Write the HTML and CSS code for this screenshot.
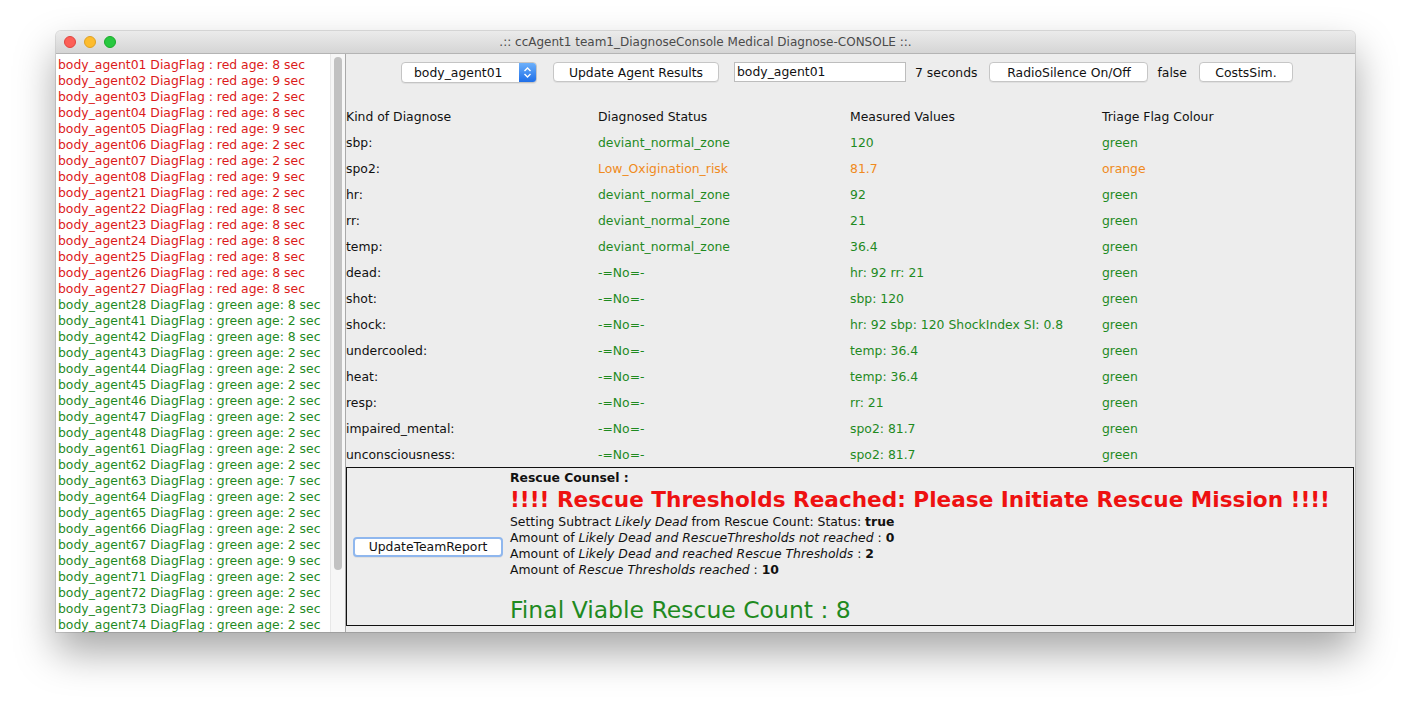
FILE: index.html
```html
<!DOCTYPE html>
<html>
<head>
<meta charset="utf-8">
<link rel="stylesheet" href="styles.css">
</head>
<body>
<div class="desktop">
  <div class="window">
    <div class="titlebar">
      <div class="lights"><span class="l red"></span><span class="l yellow"></span><span class="l green"></span></div>
      <div class="title">.:: ccAgent1 team1_DiagnoseConsole Medical Diagnose-CONSOLE ::.</div>
    </div>
    <div class="content">
      <div class="listpane">
        <div class="list">
          <div class="r">body_agent01 DiagFlag : red age: 8 sec</div>
          <div class="r">body_agent02 DiagFlag : red age: 9 sec</div>
          <div class="r">body_agent03 DiagFlag : red age: 2 sec</div>
          <div class="r">body_agent04 DiagFlag : red age: 8 sec</div>
          <div class="r">body_agent05 DiagFlag : red age: 9 sec</div>
          <div class="r">body_agent06 DiagFlag : red age: 2 sec</div>
          <div class="r">body_agent07 DiagFlag : red age: 2 sec</div>
          <div class="r">body_agent08 DiagFlag : red age: 9 sec</div>
          <div class="r">body_agent21 DiagFlag : red age: 2 sec</div>
          <div class="r">body_agent22 DiagFlag : red age: 8 sec</div>
          <div class="r">body_agent23 DiagFlag : red age: 8 sec</div>
          <div class="r">body_agent24 DiagFlag : red age: 8 sec</div>
          <div class="r">body_agent25 DiagFlag : red age: 8 sec</div>
          <div class="r">body_agent26 DiagFlag : red age: 8 sec</div>
          <div class="r">body_agent27 DiagFlag : red age: 8 sec</div>
          <div class="g">body_agent28 DiagFlag : green age: 8 sec</div>
          <div class="g">body_agent41 DiagFlag : green age: 2 sec</div>
          <div class="g">body_agent42 DiagFlag : green age: 8 sec</div>
          <div class="g">body_agent43 DiagFlag : green age: 2 sec</div>
          <div class="g">body_agent44 DiagFlag : green age: 2 sec</div>
          <div class="g">body_agent45 DiagFlag : green age: 2 sec</div>
          <div class="g">body_agent46 DiagFlag : green age: 2 sec</div>
          <div class="g">body_agent47 DiagFlag : green age: 2 sec</div>
          <div class="g">body_agent48 DiagFlag : green age: 2 sec</div>
          <div class="g">body_agent61 DiagFlag : green age: 2 sec</div>
          <div class="g">body_agent62 DiagFlag : green age: 2 sec</div>
          <div class="g">body_agent63 DiagFlag : green age: 7 sec</div>
          <div class="g">body_agent64 DiagFlag : green age: 2 sec</div>
          <div class="g">body_agent65 DiagFlag : green age: 2 sec</div>
          <div class="g">body_agent66 DiagFlag : green age: 2 sec</div>
          <div class="g">body_agent67 DiagFlag : green age: 2 sec</div>
          <div class="g">body_agent68 DiagFlag : green age: 9 sec</div>
          <div class="g">body_agent71 DiagFlag : green age: 2 sec</div>
          <div class="g">body_agent72 DiagFlag : green age: 2 sec</div>
          <div class="g">body_agent73 DiagFlag : green age: 2 sec</div>
          <div class="g">body_agent74 DiagFlag : green age: 2 sec</div>
        </div>
        <div class="scrollbar"><div class="thumb"></div></div>
      </div>
      <div class="main">
        <div class="toolbar">
          <div class="combo"><span class="combo-text">body_agent01</span><span class="combo-arrow"><svg width="9" height="13" viewBox="0 0 9 13"><path d="M1.5 5 L4.5 2 L7.5 5 M1.5 8 L4.5 11 L7.5 8" fill="none" stroke="#fff" stroke-width="1.4"/></svg></span></div>
          <div class="btn b-update">Update Agent Results</div>
          <div class="field">body_agent01</div>
          <span class="lbl">7 seconds</span>
          <div class="btn b-radio">RadioSilence On/Off</div>
          <span class="lbl">false</span>
          <div class="btn b-costs">CostsSim.</div>
        </div>
        <div class="table">
          <div class="row"><span>Kind of Diagnose</span><span>Diagnosed Status</span><span>Measured Values</span><span>Triage Flag Colour</span></div>
          <div class="row"><span>sbp:</span><span class="ok">deviant_normal_zone</span><span class="ok">120</span><span class="ok">green</span></div>
          <div class="row"><span>spo2:</span><span class="warn">Low_Oxigination_risk</span><span class="warn">81.7</span><span class="warn">orange</span></div>
          <div class="row"><span>hr:</span><span class="ok">deviant_normal_zone</span><span class="ok">92</span><span class="ok">green</span></div>
          <div class="row"><span>rr:</span><span class="ok">deviant_normal_zone</span><span class="ok">21</span><span class="ok">green</span></div>
          <div class="row"><span>temp:</span><span class="ok">deviant_normal_zone</span><span class="ok">36.4</span><span class="ok">green</span></div>
          <div class="row"><span>dead:</span><span class="ok">-=No=-</span><span class="ok">hr: 92 rr: 21</span><span class="ok">green</span></div>
          <div class="row"><span>shot:</span><span class="ok">-=No=-</span><span class="ok">sbp: 120</span><span class="ok">green</span></div>
          <div class="row"><span>shock:</span><span class="ok">-=No=-</span><span class="ok">hr: 92 sbp: 120 ShockIndex SI: 0.8</span><span class="ok">green</span></div>
          <div class="row"><span>undercooled:</span><span class="ok">-=No=-</span><span class="ok">temp: 36.4</span><span class="ok">green</span></div>
          <div class="row"><span>heat:</span><span class="ok">-=No=-</span><span class="ok">temp: 36.4</span><span class="ok">green</span></div>
          <div class="row"><span>resp:</span><span class="ok">-=No=-</span><span class="ok">rr: 21</span><span class="ok">green</span></div>
          <div class="row"><span>impaired_mental:</span><span class="ok">-=No=-</span><span class="ok">spo2: 81.7</span><span class="ok">green</span></div>
          <div class="row"><span>unconsciousness:</span><span class="ok">-=No=-</span><span class="ok">spo2: 81.7</span><span class="ok">green</span></div>
        </div>
        <div class="report">
          <div class="report-left"><div class="btn b-team">UpdateTeamReport</div></div>
          <div class="report-text">
            <div class="counsel">Rescue Counsel :</div>
            <div class="alert">!!!! Rescue Thresholds Reached: Please Initiate Rescue Mission !!!!</div>
            <div class="line">Setting Subtract <i>Likely Dead</i> from Rescue Count: Status: <b>true</b></div>
            <div class="line">Amount of <i>Likely Dead and RescueThresholds not reached</i> : <b>0</b></div>
            <div class="line">Amount of <i>Likely Dead and reached Rescue Thresholds</i> : <b>2</b></div>
            <div class="line">Amount of <i>Rescue Thresholds reached</i> : <b>10</b></div>
            <div class="final">Final Viable Rescue Count : 8</div>
          </div>
        </div>
      </div>
    </div>
  </div>
</div>
</body>
</html>
```
FILE: styles.css
```css
html, body { margin: 0; padding: 0; background: #ffffff; }
body { font-family: "DejaVu Sans", "Lucida Grande", sans-serif; font-size: 12.4px; color: #111; }
.desktop { padding: 31px 0 0 56px; height: 681px; }
.window {
  width: 1299px; height: 601px; background: #ededed;
  border-radius: 5px 5px 0 0; overflow: hidden;
  box-shadow: 0 20px 40px rgba(0,0,0,0.35), 0 0 0 1px rgba(0,0,0,0.12);
  display: flex; flex-direction: column;
}
.titlebar {
  height: 22px; flex: none; position: relative;
  background: linear-gradient(#ebebeb, #d5d5d5);
  border-bottom: 1px solid #b4b4b4;
  display: flex; align-items: center; justify-content: center;
}
.lights { position: absolute; left: 8px; top: 5px; display: flex; gap: 8px; }
.l { width: 12px; height: 12px; border-radius: 50%; display: block; box-sizing: border-box; }
.l.red { background: #fc5f57; border: 1px solid #e0443e; }
.l.yellow { background: #fdbc2e; border: 1px solid #dea123; }
.l.green { background: #28c840; border: 1px solid #1aab29; }
.title { font-size: 12px; color: #4a4a4a; }
.content { flex: 1; display: flex; min-height: 0; }
.listpane {
  width: 290px; flex: none; display: flex; background: #fff;
  border-right: 1px solid #a9a9a9; box-sizing: border-box; overflow: hidden;
}
.list { flex: 1; padding: 3px 0 0 2px; line-height: 16px; font-size: 12.4px; white-space: nowrap; overflow: hidden; }
.r { color: #dc1a1a; }
.g { color: #1f8a1f; }
.scrollbar { width: 15px; flex: none; background: #f7f7f7; border-left: 1px solid #e8e8e8; padding: 3px 0 0 3px; box-sizing: border-box; }
.thumb { width: 8px; height: 513px; background: #c2c2c2; border-radius: 4px; }
.main { flex: 1; display: flex; flex-direction: column; }
.toolbar { height: 49px; flex: none; display: flex; align-items: flex-start; padding: 8px 0 0 55px; box-sizing: border-box; font-size: 12.4px; }
.combo {
  width: 136px; height: 21px; background: #fff; border: 1px solid #c4c4c4; border-radius: 4px;
  box-sizing: border-box; display: flex; overflow: hidden; box-shadow: 0 1px 0 rgba(0,0,0,0.05);
}
.combo-text { flex: 1; padding-left: 12px; line-height: 19px; }
.combo-arrow { width: 17px; background: linear-gradient(#6cb0fb, #1f6fe8); display: flex; align-items: center; justify-content: center; }
.btn {
  height: 20px; background: #fff; border: 1px solid #c6c6c6; border-radius: 4px; box-sizing: border-box;
  display: flex; align-items: center; justify-content: center; font-size: 12.4px; box-shadow: 0 1px 0 rgba(0,0,0,0.05);
}
.b-update { width: 166px; margin-left: 16px; }
.field { width: 172px; height: 20px; background: #fff; border: 1px solid #bdbdbd; box-sizing: border-box; margin-left: 15px; padding-left: 2px; line-height: 18px; }
.lbl { line-height: 21px; margin: 0 0 0 9px; }
.b-radio { width: 159px; margin-left: 12px; }
.b-costs { width: 94px; margin-left: 12px; }
.b-team { width: 150px; height: 20px; border: 2px solid #8fb7ee; border-radius: 4px; }
.table { flex: none; }
.row { height: 26px; display: grid; grid-template-columns: 252px 252px 252px 252px; align-items: center; }
.ok { color: #1f8a1f; }
.warn { color: #f08a20; }
.report {
  height: 159px; width: 1008px; box-sizing: border-box; border: 1px solid #111;
  display: flex;
}
.report-left { width: 163px; flex: none; display: flex; align-items: center; padding: 0 0 0 6px; box-sizing: border-box; }
.report-text { flex: 1; padding-top: 2px; }
.counsel { font-weight: bold; line-height: 16px; }
.alert { color: #ee1111; font-weight: bold; font-size: 21.6px; line-height: 28px; }
.line { line-height: 16px; }
.final { color: #1f8a1f; font-size: 23.5px; line-height: 30px; margin-top: 17px; }
```
